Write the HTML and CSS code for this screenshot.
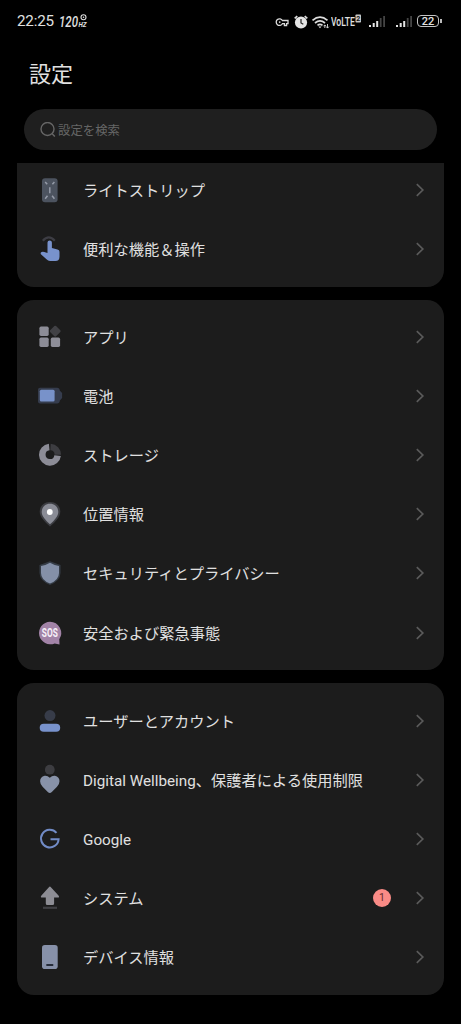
FILE: index.html
```html
<!DOCTYPE html>
<html lang="ja">
<head>
<meta charset="utf-8">
<title>設定</title>
<link rel="stylesheet" href="styles.css">
</head>
<body>
<svg class="defs" width="0" height="0"><symbol id="chev" viewBox="0 0 10 16"><path d="M1.8 2.2 7.8 8l-6 5.8" fill="none" stroke="#5a5a5a" stroke-width="1.7"/></symbol></svg>
<header class="status">
  <span class="time">22:25</span>
  <svg class="rate" width="30" height="16" viewBox="0 0 30 16" fill="#e0e0e0"><text x="0" y="14" textLength="19" lengthAdjust="spacingAndGlyphs" class="rate-num">120</text><text x="19.500" y="14" textLength="8" lengthAdjust="spacingAndGlyphs" class="rate-unit">HZ</text><circle cx="24.500" cy="4.200" r="2.500" fill="none" stroke="#ddd" stroke-width="1.100"/><circle cx="24.500" cy="4.200" r=".8"/></svg>
  <svg class="tray" width="56" height="20" viewBox="0 0 56 20" fill="none" stroke="#dcdcdc">
    <path d="M7.400 9.500a3.300 3.300 0 1 0 0 3.200h2v1.800h2.200v-1.800H13V9.500z" stroke-width="1.300"/><circle cx="4.700" cy="11.100" r=".9" fill="#dcdcdc" stroke="none"/>
    <circle cx="26" cy="11.500" r="6.100" fill="#e4e4e4" stroke="none"/><path d="m19.700 7.400 2.600-2.300m10 2.300-2.600-2.300" stroke-width="1.700"/><path d="M26 8v4l2.300 1.300" stroke="#222" stroke-width="1.200"/>
    <path d="M37.500 9.300q7.500-6.500 15 0M40 12q5-4.200 10 0M42.500 14.300q2.500-2 5 0" stroke-width="1.700"/><path d="m43.400 15.500 1.600 1.800 1.600-1.800z" fill="#ddd" stroke="none"/><path d="M49.800 17v-3m-1.300 1.300 1.300-1.400 1.300 1.400M52.500 13v4m-1.300-1.300 1.300 1.400 1.300-1.400" stroke-width=".9"/>
  </svg>
  <svg class="volte" width="31" height="18" viewBox="0 0 31 18" fill="#e0e0e0"><text x="0" y="14.300" textLength="24" lengthAdjust="spacingAndGlyphs" class="volte-text">VoLTE</text><rect x="24.500" y="2.500" width="5.500" height="8" rx=".8" fill="#c8c8c8"/><text x="27.250" y="9" text-anchor="middle" class="volte-sim">2</text></svg>
  <svg class="signal" width="18" height="14" viewBox="0 0 18 14"><path d="M1 11h2v2H1zm3.700-2h2v4h-2zm3.500-2h2v6h-2z" fill="#e4e4e4"/><path d="M11.800 4h1.800v9h-1.800zm3.400-2H17v11h-1.800z" fill="#444"/></svg>
  <svg class="signal second" width="18" height="14" viewBox="0 0 18 14"><path d="M1 11h2v2H1zm3.700-2h2v4h-2zm3.500-2h2v6h-2z" fill="#e4e4e4"/><path d="M11.800 4h1.800v9h-1.800zm3.400-2H17v11h-1.800z" fill="#444"/></svg>
  <span class="battery">22</span><span class="nub"></span>
</header>
<h1 class="title">設定</h1>
<div class="search">
  <svg width="16" height="16" viewBox="0 0 16 16" fill="none" stroke="#666" stroke-width="1.400"><circle cx="7.500" cy="7" r="6.500"/><path d="m12.200 11.700 2.600 2.800"/></svg>
  <span>設定を検索</span>
</div>
<main>
  <section class="card clipped">
    <div class="row"><svg class="icon" viewBox="0 0 32 32"><rect x="8" y="4.200" width="15.600" height="24" rx="3" fill="#4c535f"/><path d="m11.200 8 2 2.300M20.400 8l-2 2.300M11.200 24.800l2.300-3M20.400 24.800l-2.300-3M15.800 13.300v6" stroke="#959ba8" stroke-width="1.500"/></svg><span class="label">ライトストリップ</span><svg class="chev"><use href="#chev"/></svg></div>
    <div class="row"><svg class="icon" viewBox="0 0 32 32"><path d="M8.800 7.700q6-6.600 12 0" fill="none" stroke="#3d3d44" stroke-width="2.200"/><path d="M13.500 9.600a2.200 2.200 0 0 1 4.400 0v5.500l5.600 1.300q2 .4 2 2.300v4.700q0 4.500-4 4.500h-5.500q-2 0-3.500-1.600L7.200 21.600q-1.400-1.800.5-2.700 1.200-.6 2.600.2l3.200 1z" fill="#7892cc"/></svg><span class="label">便利な機能＆操作</span><svg class="chev"><use href="#chev"/></svg></div>
  </section>
  <section class="card">
    <div class="row"><svg class="icon" viewBox="0 0 32 32"><g fill="#8d8d97"><rect x="5.400" y="5.600" width="9.300" height="9.300" rx="1.600"/><rect x="5.400" y="16.600" width="9.300" height="9.300" rx="1.600"/><rect x="16.800" y="16.600" width="9.300" height="9.300" rx="1.600"/></g><rect x="17" y="6" width="8.400" height="8.400" rx="1.200" transform="rotate(45 21.200 10.200)" fill="#414145"/></svg><span class="label">アプリ</span><svg class="chev"><use href="#chev"/></svg></div>
    <div class="row"><svg class="icon" viewBox="0 0 32 32"><path d="M6 7.700h17.200q2.300 0 2.700 3l2.200 2.400v5l-2.200 2.400q-.4 3-2.700 3H6q-2 0-2-2V9.700q0-2 2-2z" fill="#353c4d"/><rect x="5.800" y="9.800" width="14.800" height="11.600" rx="1.500" fill="#7892ca"/></svg><span class="label">電池</span><svg class="chev"><use href="#chev"/></svg></div>
    <div class="row"><svg class="icon" viewBox="0 0 32 32"><path d="M16.500 8a7.700 7.700 0 0 1 7.300 7.800" fill="none" stroke="#3d3d41" stroke-width="6.500"/><path d="M15.200 8a7.700 7.700 0 1 0 8.400 8.600" fill="none" stroke="#8c8c96" stroke-width="6.600"/></svg><span class="label">ストレージ</span><svg class="chev"><use href="#chev"/></svg></div>
    <div class="row"><svg class="icon" viewBox="0 0 32 32"><path d="M16 4c6 0 10.300 4 10.300 9.800 0 4.700-4.300 9.700-10.300 14.700C10 23.500 5.700 18.500 5.700 13.800 5.700 8 10 4 16 4z" fill="#3c3d42"/><path d="M16 5.800c5 0 8.300 3.500 8.300 8.200 0 4-3.600 8-8.300 12.300C11.300 22 7.700 18 7.700 14c0-4.700 3.300-8.200 8.300-8.200z" fill="#8a8c96"/><circle cx="15.800" cy="14" r="2.900" fill="#fff"/></svg><span class="label">位置情報</span><svg class="chev"><use href="#chev"/></svg></div>
    <div class="row"><svg class="icon" viewBox="0 0 32 32"><path d="M16 4.200 26.500 8v8q0 7.500-10.500 12Q5.500 23.500 5.500 16V8z" fill="#353c46"/><path d="M16 5.800Q20 8.300 25 9v7q0 7-9 10.500Q7 23 7 16V9q5-.7 9-3.200z" fill="#8490a8"/></svg><span class="label">セキュリティとプライバシー</span><svg class="chev"><use href="#chev"/></svg></div>
    <div class="row"><svg class="icon" viewBox="0 0 32 32"><path d="M16 4.700a11.300 11.300 0 0 1 9.300 17.500l.2 5.200-4.800-1A11.300 11.300 0 1 1 16 4.700z" fill="#a283a7"/><text x="15.800" y="20.300" text-anchor="middle" textLength="16" lengthAdjust="spacingAndGlyphs" class="sos">SOS</text></svg><span class="label">安全および緊急事態</span><svg class="chev"><use href="#chev"/></svg></div>
  </section>
  <section class="card last">
    <div class="row"><svg class="icon" viewBox="0 0 32 32"><circle cx="16" cy="10.600" r="5.500" fill="#373c49"/><rect x="5.700" y="18.700" width="20.500" height="8" rx="4" fill="#7892cc"/></svg><span class="label">ユーザーとアカウント</span><svg class="chev"><use href="#chev"/></svg></div>
    <div class="row"><svg class="icon" viewBox="0 0 32 32"><circle cx="15.800" cy="5.700" r="4.900" fill="#3d3d41"/><path d="M15.800 13.800q2.500-2.500 5.200-2 4.500 1 4.500 5.500 0 3-2.500 5.500l-5.200 5.300q-2 1.900-4 0L8.600 22.800q-2.500-2.500-2.500-5.500 0-4.500 4.500-5.500 2.700-.5 5.200 2z" fill="#8892a8"/></svg><span class="label">Digital Wellbeing、保護者による使用制限</span><svg class="chev"><use href="#chev"/></svg></div>
    <div class="row"><svg class="icon" viewBox="0 0 32 32"><path d="M22.500 9.900a8.800 8.800 0 1 0 2.100 6.300H16.500" fill="none" stroke="#718bc6" stroke-width="2"/></svg><span class="label">Google</span><svg class="chev"><use href="#chev"/></svg></div>
    <div class="row"><svg class="icon" viewBox="0 0 32 32"><path d="M14.900 5.200q1-1.200 2 0l7.600 8.400q1.500 2-.8 2h-3.600v5.900q0 1.500-1.500 1.500h-5.300q-1.500 0-1.500-1.500v-5.900H8.200q-2.300 0-.8-2z" fill="#8d8d94"/><path d="M9 25.800h14" stroke="#414145" stroke-width="2.200"/></svg><span class="label">システム</span><span class="count">1</span><svg class="chev"><use href="#chev"/></svg></div>
    <div class="row"><svg class="icon" viewBox="0 0 32 32"><rect x="8" y="4" width="15.700" height="24" rx="2.800" fill="#8791a9"/><rect x="12.300" y="22.900" width="7" height="2.200" rx=".6" fill="#262c3a"/></svg><span class="label">デバイス情報</span><svg class="chev"><use href="#chev"/></svg></div>
  </section>
</main>
</body>
</html>
```
FILE: styles.css
```css
* { box-sizing: border-box; }
body {
  margin: 0;
  height: 1024px;
  overflow: hidden;
  background: #000;
  color: #e0e0e0;
  font-family: Roboto, "Noto Sans CJK JP", sans-serif;
}
.defs { display: block; height: 0; }
.status {
  display: flex;
  align-items: center;
  height: 42px;
  padding-left: 17px;
}
.status > * { flex: none; }
.time { width: 42px; font-size: 15.200px; letter-spacing: -0.200px; }
.rate-num { font: italic 500 14px Roboto, sans-serif; }
.rate-unit { font: italic 700 7px Roboto, sans-serif; }
.tray { margin-left: 186px; }
.volte-text { font: 500 12px Roboto, sans-serif; }
.volte-sim { fill: #111; font: 700 7px Roboto, sans-serif; }
.signal { margin-left: 6px; }
.signal.second { margin-left: 9px; }
.battery {
  width: 22px;
  height: 12px;
  margin-left: 4px;
  border: 1px solid #c4c4c4;
  border-radius: 4px;
  font-size: 11px;
  font-weight: 500;
  line-height: 11px;
  text-align: center;
}
.nub { width: 1.500px; height: 4px; margin-left: 1px; background: #bbb; }
.title {
  height: 67px;
  margin: 0;
  padding-left: 29px;
  font-size: 22px;
  font-weight: 400;
  line-height: 66px;
}
.search {
  display: flex;
  align-items: center;
  gap: 2px;
  width: 413px;
  height: 41px;
  margin-left: 24px;
  padding-left: 16px;
  border-radius: 21px;
  background: #1f1f1f;
  color: #666;
  font-size: 12.400px;
}
main { display: flex; flex-direction: column; gap: 13px; padding: 13px 17px 0; }
.card { padding: 8px 0; border-radius: 17px; background: #1c1c1c; }
.clipped { height: 123.500px; padding: 0; border-radius: 0 0 17px 17px; overflow: hidden; }
.clipped .row:first-child { margin-top: -3px; }
.row { display: flex; align-items: center; height: 59.100px; padding: 0 19px 0 17px; }
.icon { flex: none; width: 32px; height: 32px; }
.label { flex: 1; margin-left: 17px; padding-top: 2px; font-size: 15.240px; line-height: 24px; white-space: nowrap; }
.chev { flex: none; width: 10px; height: 16px; }
.count {
  width: 18px;
  height: 18px;
  margin-right: 24px;
  border-radius: 50%;
  background: #f98b86;
  color: #642c2a;
  font-size: 10.500px;
  line-height: 18px;
  text-align: center;
}
.sos { fill: #f7f0f8; font: 700 12px Roboto, sans-serif; }
```
